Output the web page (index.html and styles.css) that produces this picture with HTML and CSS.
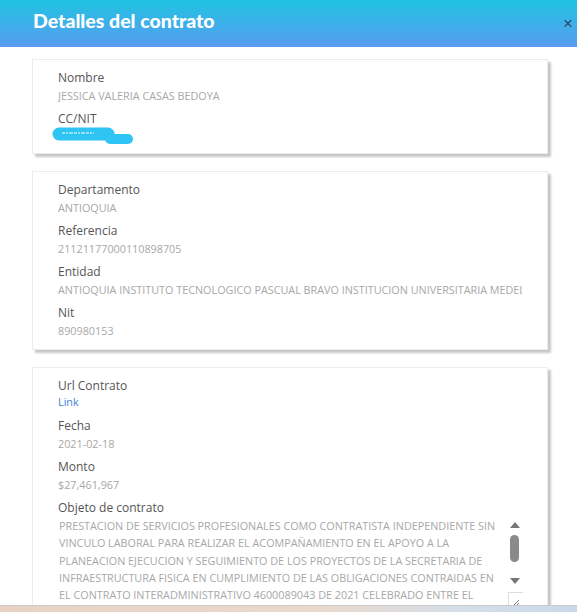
FILE: index.html
```html
<!DOCTYPE html>
<html lang="es">
<head>
<meta charset="UTF-8" />
<meta name="viewport" content="width=device-width, initial-scale=1" />
<title>Detalles del contrato</title>
<link rel="stylesheet" href="styles.css">
</head>
<body>
<div class="modal">
  <!-- Encabezado -->
  <header class="modal-header">
    <h1>Detalles del contrato</h1>
    <button class="close-btn" aria-label="Cerrar">&times;</button>
  </header>

  <div class="modal-body">
    <!-- Persona -->
    <section class="card">
      <div class="field">
        <div class="label">Nombre</div>
        <div class="value">JESSICA VALERIA CASAS BEDOYA</div>
      </div>
      <div class="field">
        <div class="label">CC/NIT</div>
        <div class="value hidden-value">
          <svg width="84" height="19" viewBox="0 0 84 19">
            <path d="M7 7 H 56" stroke="#2ec4f3" stroke-width="13" stroke-linecap="round" />
            <path d="M58 12 H 76" stroke="#2ec4f3" stroke-width="10" stroke-linecap="round" />
            <path d="M10 6 H 42" stroke="#ffffff" stroke-width="1.2" stroke-dasharray="3 1 2 1 4 1" />
          </svg>
        </div>
      </div>
    </section>

    <!-- Entidad -->
    <section class="card">
      <div class="field">
        <div class="label">Departamento</div>
        <div class="value">ANTIOQUIA</div>
      </div>
      <div class="field">
        <div class="label">Referencia</div>
        <div class="value">21121177000110898705</div>
      </div>
      <div class="field">
        <div class="label">Entidad</div>
        <div class="value">ANTIOQUIA INSTITUTO TECNOLOGICO PASCUAL BRAVO INSTITUCION UNIVERSITARIA MEDELLIN</div>
      </div>
      <div class="field">
        <div class="label">Nit</div>
        <div class="value">890980153</div>
      </div>
    </section>

    <!-- Contrato -->
    <section class="card">
      <div class="field">
        <div class="label">Url Contrato</div>
        <a class="value link" href="#">Link</a>
      </div>
      <div class="field">
        <div class="label">Fecha</div>
        <div class="value">2021-02-18</div>
      </div>
      <div class="field">
        <div class="label">Monto</div>
        <div class="value">$27,461,967</div>
      </div>
      <div class="field">
        <div class="label">Objeto de contrato</div>
        <div class="textbox">
          <div class="textbox-text">PRESTACION DE SERVICIOS PROFESIONALES COMO CONTRATISTA INDEPENDIENTE SIN VINCULO LABORAL PARA REALIZAR EL ACOMPAÑAMIENTO EN EL APOYO A LA PLANEACION EJECUCION Y SEGUIMIENTO DE LOS PROYECTOS DE LA SECRETARIA DE INFRAESTRUCTURA FISICA EN CUMPLIMIENTO DE LAS OBLIGACIONES CONTRAIDAS EN EL CONTRATO INTERADMINISTRATIVO 4600089043 DE 2021 CELEBRADO ENTRE EL DEPARTAMENTO DE ANTIOQUIA Y EL INSTITUTO</div>
          <div class="scrollbar">
            <span class="arrow up"></span>
            <span class="thumb"></span>
            <span class="arrow down"></span>
          </div>
          <span class="resize">
            <svg width="8" height="8" viewBox="0 0 8 8"><path d="M1 7 L7 1 M4 7 L7 4" stroke="#666" stroke-width="0.8" /></svg>
          </span>
        </div>
      </div>
    </section>
  </div>
</div>
<div class="desktop-strip"></div>
</body>
</html>
```

FILE: styles.css
```css
* {
  box-sizing: border-box;
}
body {
  margin: 0;
  font-family: "Open Sans", "Liberation Sans", sans-serif;
  background: #fff;
  color: #555;
}

.modal {
  height: 606px;
  overflow: hidden;
  border-bottom: 1px solid #c9c9c9;
}

/* Encabezado azul */
.modal-header {
  height: 47px;
  padding: 0 0 0 33px;
  display: flex;
  align-items: center;
  justify-content: space-between;
  background: linear-gradient(180deg, #20c3e2, #599cf0);
}
.modal-header h1 {
  margin: 0 0 7px 0;
  font-family: "Lato", sans-serif;
  font-weight: 900;
  font-size: 19.5px;
  color: #fff;
}
.close-btn {
  background: none;
  border: none;
  color: #2b4a6a;
  font-size: 17px;
  line-height: 1;
  padding: 0;
  margin: 0 4px 0 0;
  cursor: pointer;
}

.modal-body {
  padding: 12px 29px 0 32px;
  display: flex;
  flex-direction: column;
  gap: 17px;
}

.card {
  background: #fff;
  border: 1px solid #ececec;
  box-shadow: 3px 3px 2px rgba(0, 0, 0, 0.22);
  padding: 9px 25px 9px 25px;
  display: flex;
  flex-direction: column;
  gap: 5px;
}

.field {
  display: flex;
  flex-direction: column;
}
.label {
  font-size: 12px;
  line-height: 18px;
  color: #555;
}
.value {
  font-size: 10.8px;
  line-height: 18px;
  color: #a8a8a8;
  white-space: nowrap;
  overflow: hidden;
}
.link {
  color: #3b7fd6;
  text-decoration: none;
  line-height: 13px;
  margin-bottom: 4px;
}
.hidden-value {
  height: 17px;
  margin: -1px 0 0 -6px;
  overflow: visible;
}

/* caja de texto del objeto */
.textbox {
  position: relative;
  display: flex;
  width: 465px;
  height: 94px;
}
.textbox-text {
  flex: 1;
  padding: 0 0 0 1px;
  font-size: 10.8px;
  line-height: 17.3px;
  color: #a8a8a8;
  overflow: hidden;
}
.scrollbar {
  width: 17px;
  display: flex;
  flex-direction: column;
  align-items: center;
  padding-top: 5px;
}
.arrow {
  width: 0;
  height: 0;
  border-left: 5px solid transparent;
  border-right: 5px solid transparent;
}
.arrow.up {
  border-bottom: 6px solid #777;
}
.arrow.down {
  border-top: 6px solid #777;
  margin-top: 16px;
}
.thumb {
  width: 9px;
  height: 27px;
  margin-top: 7px;
  border-radius: 5px;
  background: #8a8a8a;
}
.resize {
  position: absolute;
  right: 0;
  bottom: 0;
  width: 15px;
  height: 19px;
  border-left: 1px solid #ddd;
  border-top: 1px solid #ddd;
  display: flex;
  align-items: flex-end;
  justify-content: flex-end;
  padding: 0 3px 4px 0;
}

.desktop-strip {
  height: 6px;
  background: linear-gradient(90deg, #e9d2c4, #ead9cc 55%, #d5dfe9 80%, #c9d8ea);
}
```
